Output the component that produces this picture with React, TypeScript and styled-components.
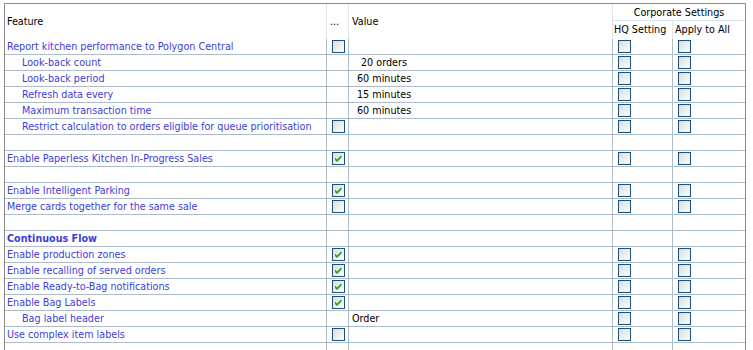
import styled, { createGlobalStyle } from 'styled-components';

const GlobalStyle = createGlobalStyle`
  *, *::before, *::after {
    box-sizing: border-box;
  }
  html, body {
    margin: 0;
    padding: 0;
    background: #ffffff;
    overflow: hidden;
  }
  body {
    font-family: "DejaVu Sans Condensed", "DejaVu Sans", sans-serif;
    font-stretch: condensed;
    font-size: 10.7px;
  }
`;

const LINE = '#adbccb';

const Grid = styled.div`
  margin: 3px 0 0 4px;
  width: 742px;
  border: 1px solid #8c8c8c;
  border-bottom: none;
`;

const HeaderRow = styled.div`
  display: grid;
  grid-template-columns: 322px 22px 264px 132px;
  height: 35px;
`;

const HeaderCell = styled.div<{ $pad?: number; $last?: boolean }>`
  display: flex;
  align-items: center;
  padding-left: ${p => p.$pad ?? 2}px;
  border-right: ${p => (p.$last ? 'none' : '1px solid #e3e3e3')};
  color: #000;
`;

const Corporate = styled.div`
  display: grid;
  grid-template-rows: 17px 18px;
`;

const CorporateTitle = styled.div`
  display: flex;
  align-items: center;
  justify-content: center;
  border-bottom: 1px solid #d6e6f5;
  padding-top: 1px;
`;

const CorporateSubs = styled.div`
  display: grid;
  grid-template-columns: 60px 72px;
`;

const SubHeader = styled.div<{ $last?: boolean }>`
  display: flex;
  align-items: center;
  padding-left: ${p => (p.$last ? 2 : 1)}px;
  padding-bottom: 2px;
  border-right: ${p => (p.$last ? 'none' : '1px solid #e3e3e3')};
  white-space: nowrap;
`;

const Row = styled.div`
  display: grid;
  grid-template-columns: 322px 22px 264px 60px 72px;
  height: 16px;
  border-bottom: 1px solid ${LINE};
`;

const Cell = styled.div<{ $last?: boolean }>`
  display: flex;
  align-items: center;
  padding-left: 5px;
  border-right: ${p => (p.$last ? 'none' : `1px solid ${LINE}`)};
  overflow: hidden;
  white-space: nowrap;
`;

const FeatureCell = styled(Cell)<{ $indent?: boolean; $bold?: boolean }>`
  padding-left: ${p => (p.$indent ? 17 : 2)}px;
  color: #3d3dd9;
  font-weight: ${p => (p.$bold ? 'bold' : 'normal')};
`;

const ValueCell = styled(Cell)<{ $pad?: number }>`
  padding-left: ${p => p.$pad ?? 3}px;
  color: #000;
`;

const Box = styled.span`
  width: 13px;
  height: 13px;
  flex: none;
  border: 1px solid #1c5180;
  background: linear-gradient(135deg, #dcdcd6 0%, #f4f4f2 70%, #ffffff 100%);
  display: flex;
  align-items: center;
  justify-content: center;
`;

function CheckBox({ checked }: { checked?: boolean }) {
  return (
    <Box>
      {checked && (
        <svg width="9" height="9" viewBox="0 0 9 9">
          <path d="M1 3.5 L3 5.5 L7.5 1 L7.5 3.5 L3 8 L1 6 Z" fill="#21a121" />
        </svg>
      )}
    </Box>
  );
}

type Setting = {
  label?: string;
  indent?: boolean;
  bold?: boolean;
  check?: boolean;
  value?: string;
  valuePad?: number;
  corp?: boolean;
};

const settings: Setting[] = [
  { label: 'Report kitchen performance to Polygon Central', check: false, corp: true },
  { label: 'Look-back count', indent: true, value: '20 orders', valuePad: 12, corp: true },
  { label: 'Look-back period', indent: true, value: '60 minutes', valuePad: 8, corp: true },
  { label: 'Refresh data every', indent: true, value: '15 minutes', valuePad: 8, corp: true },
  { label: 'Maximum transaction time', indent: true, value: '60 minutes', valuePad: 8, corp: true },
  { label: 'Restrict calculation to orders eligible for queue prioritisation', indent: true, check: false, corp: true },
  {},
  { label: 'Enable Paperless Kitchen In-Progress Sales', check: true, corp: true },
  {},
  { label: 'Enable Intelligent Parking', check: true, corp: true },
  { label: 'Merge cards together for the same sale', check: false, corp: true },
  {},
  { label: 'Continuous Flow', bold: true },
  { label: 'Enable production zones', check: true, corp: true },
  { label: 'Enable recalling of served orders', check: true, corp: true },
  { label: 'Enable Ready-to-Bag notifications', check: true, corp: true },
  { label: 'Enable Bag Labels', check: true, corp: true },
  { label: 'Bag label header', indent: true, value: 'Order', valuePad: 3, corp: true },
  { label: 'Use complex item labels', check: false, corp: true },
  {},
];

export default function App() {
  return (
    <>
      <GlobalStyle />
      <Grid>
        <HeaderRow>
          <HeaderCell>Feature</HeaderCell>
          <HeaderCell $pad={3}>...</HeaderCell>
          <HeaderCell $pad={3}>Value</HeaderCell>
          <Corporate>
            <CorporateTitle>Corporate Settings</CorporateTitle>
            <CorporateSubs>
              <SubHeader>HQ Setting</SubHeader>
              <SubHeader $last>Apply to All</SubHeader>
            </CorporateSubs>
          </Corporate>
        </HeaderRow>
        {settings.map((s, i) => (
          <Row key={i}>
            <FeatureCell $indent={s.indent} $bold={s.bold}>{s.label}</FeatureCell>
            <Cell>{s.check !== undefined && <CheckBox checked={s.check} />}</Cell>
            <ValueCell $pad={s.valuePad}>{s.value}</ValueCell>
            <Cell>{s.corp && <CheckBox />}</Cell>
            <Cell $last>{s.corp && <CheckBox />}</Cell>
          </Row>
        ))}
      </Grid>
    </>
  );
}
